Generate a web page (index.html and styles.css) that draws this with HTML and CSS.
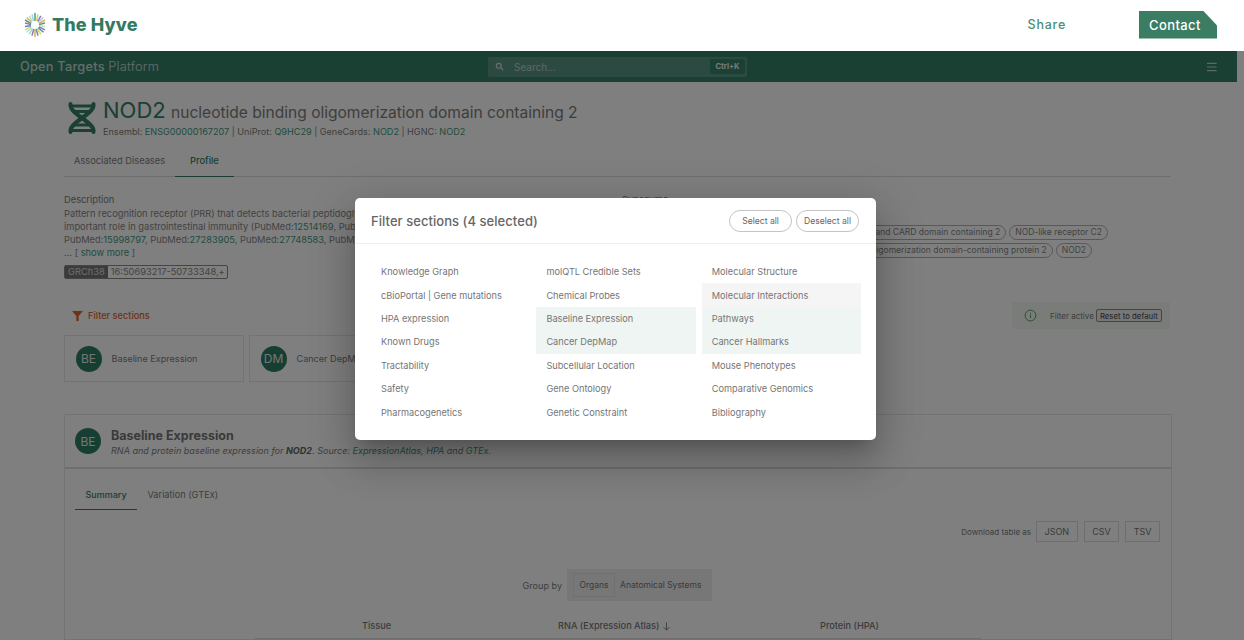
FILE: index.html
```html
<!DOCTYPE html>
<html lang="en">
<head>
<meta charset="utf-8">
<title>NOD2 profile page</title>
<link rel="stylesheet" href="styles.css">
</head>
<body>
<header class="site-header">
  <a class="brand">
    <svg class="brand-logo" viewBox="-12 -12 24 24" aria-hidden="true">
      <g stroke-width="1.5" stroke-linecap="butt" opacity=".85">
        <line x1="0" y1="-4" x2="0" y2="-12" stroke="#2f8f6b"/>
        <line x1="1.5" y1="-4" x2="3" y2="-10.500" stroke="#e0c948"/>
        <line x1="2.800" y1="-3.300" x2="5.800" y2="-9.200" stroke="#7a5fb5"/>
        <line x1="3.400" y1="-2.500" x2="8.300" y2="-7.500" stroke="#8ed0e6"/>
        <line x1="3.900" y1="-1.400" x2="10" y2="-5" stroke="#e09a45"/>
        <line x1="4" y1="-.4" x2="10" y2="-2" stroke="#2f8f6b"/>
        <line x1="4" y1=".8" x2="10" y2="1.400" stroke="#a8dcb8"/>
        <line x1="3.900" y1="1.800" x2="10" y2="4.800" stroke="#7a5fb5"/>
        <line x1="3.200" y1="2.800" x2="8.500" y2="7.300" stroke="#3f6fb5"/>
        <line x1="2.300" y1="3.400" x2="5.800" y2="9.200" stroke="#e0c948"/>
        <line x1="1.200" y1="4" x2="3" y2="10.600" stroke="#2f8f6b"/>
        <line x1="0" y1="4" x2="0" y2="12" stroke="#e09a45"/>
        <line x1="-1.200" y1="4" x2="-3" y2="10.600" stroke="#7a5fb5"/>
        <line x1="-2.300" y1="3.400" x2="-5.800" y2="9.200" stroke="#8ed0e6"/>
        <line x1="-3.200" y1="2.800" x2="-8.500" y2="7.300" stroke="#a8dcb8"/>
        <line x1="-3.900" y1="1.800" x2="-10" y2="4.800" stroke="#e0c948"/>
        <line x1="-4" y1=".8" x2="-10" y2="1.400" stroke="#3f6fb5"/>
        <line x1="-4" y1="-.4" x2="-10" y2="-2" stroke="#7a5fb5"/>
        <line x1="-3.900" y1="-1.400" x2="-10" y2="-5" stroke="#2f8f6b"/>
        <line x1="-3.400" y1="-2.500" x2="-8.300" y2="-7.500" stroke="#e09a45"/>
        <line x1="-2.800" y1="-3.300" x2="-5.800" y2="-9.200" stroke="#a8dcb8"/>
        <line x1="-1.500" y1="-4" x2="-3" y2="-10.500" stroke="#8ed0e6"/>
      </g>
    </svg>
    <span class="brand-name">The Hyve</span>
  </a>
  <nav class="site-nav">
    <a class="share-link">Share</a>
    <a class="contact-btn">Contact</a>
  </nav>
</header>

<div class="app-frame">
  <div class="app-scroll">
    <div class="app-bar">
      <div class="app-title">Open Targets <span class="app-title-light">Platform</span></div>
      <div class="search">
        <svg class="search-icon" viewBox="0 0 24 24" aria-hidden="true"><circle cx="10" cy="10" r="6.500" fill="none" stroke="currentColor" stroke-width="3"/><path d="M15 15l6 6" stroke="currentColor" stroke-width="3" stroke-linecap="round"/></svg>
        <span class="search-text">Search...</span>
        <kbd class="search-kbd">Ctrl+K</kbd>
      </div>
      <svg class="menu-icon" viewBox="0 0 12 10" aria-hidden="true"><path d="M0 1h10.500M0 5h10.500M0 9h10.500" stroke="currentColor" stroke-width="1.300"/></svg>
    </div>

    <main class="page">
      <section class="hero">
        <svg class="dna-icon" viewBox="0 0 28 32" aria-hidden="true">
          <g fill="none" stroke="#347f67" stroke-linecap="round">
            <path d="M2.500 2v1.500C2.500 12 25.500 20 25.500 28.500V30" stroke-width="4"/>
            <path d="M25.500 2v1.500C25.500 12 2.500 20 2.500 28.500V30" stroke-width="4"/>
            <path d="M3 4H25M6.500 9.500H21.500M6.500 23H21.500M3 28.500H25" stroke-width="2.800"/>
          </g>
        </svg>
        <div class="hero-text">
          <h1 class="hero-title"><span class="hero-symbol">NOD2</span> <span class="hero-name">nucleotide binding oligomerization domain containing 2</span></h1>
          <p class="hero-ids">Ensembl: <a>ENSG00000167207</a> | UniProt: <a>Q9HC29</a> | GeneCards: <a>NOD2</a> | HGNC: <a>NOD2</a></p>
        </div>
      </section>

      <div class="page-tabs">
        <span class="tab">Associated Diseases</span>
        <span class="tab tab-active">Profile</span>
      </div>

      <section class="profile">
        <div class="profile-desc">
          <h2 class="profile-label">Description</h2>
          <p class="desc-text">Pattern recognition receptor (PRR) that detects bacterial peptidogly<br>important role in gastrointestinal immunity (PubMed:<a>12514169</a>, PubM<br>PubMed:<a>15998797</a>, PubMed:<a>27283905</a>, PubMed:<a>27748583</a>, PubMe<br>... [ <a>show more</a> ]</p>
          <div class="locus"><span class="locus-tag">GRCh38</span><span class="locus-value">16:50693217-50733348,+</span></div>
        </div>
        <div class="profile-syn">
          <h2 class="profile-label">Synonyms</h2>
          <div class="chips chips-first">
            <span class="chip">nucleotide binding LRR and CARD domain containing 2</span>
            <span class="chip">NOD-like receptor C2</span>
          </div>
          <div class="chips chips-second">
            <span class="chip">Nucleotide-binding oligomerization domain-containing protein 2</span>
            <span class="chip">NOD2</span>
          </div>
        </div>
      </section>

      <div class="filter-row">
        <div class="filter-link">
          <svg class="filter-icon" viewBox="0 0 12 11" aria-hidden="true"><path d="M0 0h12L7.300 5.600V11H4.700V5.600z" fill="currentColor"/></svg>
          Filter sections
        </div>
        <div class="filter-alert">
          <svg class="info-icon" viewBox="0 0 14 14" aria-hidden="true"><circle cx="7" cy="7" r="5.800" fill="none" stroke="currentColor" stroke-width="1"/><path d="M7 6.200v3.600M7 4v1.200" stroke="currentColor" stroke-width="1"/></svg>
          <span class="filter-alert-text">Filter active</span>
          <button class="reset-btn">Reset to default</button>
        </div>
      </div>

      <div class="summary-cards">
        <div class="summary-card"><span class="avatar">BE</span><span>Baseline Expression</span></div>
        <div class="summary-card"><span class="avatar">DM</span><span>Cancer DepMap</span></div>
      </div>

      <section class="section-card">
        <header class="section-head">
          <span class="avatar">BE</span>
          <div class="section-heading">
            <h3 class="section-title">Baseline Expression</h3>
            <p class="section-sub">RNA and protein baseline expression for <b>NOD2</b>. Source: <a>ExpressionAtlas</a>, <a>HPA</a> and <a>GTEx</a>.</p>
          </div>
        </header>
        <div class="section-body">
          <div class="inner-tabs">
            <span class="inner-tab inner-tab-active">Summary</span>
            <span class="inner-tab">Variation (GTEx)</span>
          </div>
          <div class="download-row">
            <span class="download-label">Download table as</span>
            <button class="dl-btn">JSON</button>
            <button class="dl-btn">CSV</button>
            <button class="dl-btn">TSV</button>
          </div>
          <div class="group-row">
            <span class="group-label">Group by</span>
            <div class="group-toggle">
              <span class="group-opt group-opt-on">Organs</span>
              <span class="group-opt">Anatomical Systems</span>
            </div>
          </div>
          <div class="table-head">
            <span class="th th-tissue">Tissue</span>
            <span class="th th-rna">RNA (Expression Atlas) <svg class="sort-icon" viewBox="0 0 10 10" aria-hidden="true"><path d="M5 .5v8.500M1.500 5.500L5 9l3.500-3.500" fill="none" stroke="currentColor" stroke-width="1"/></svg></span>
            <span class="th th-protein">Protein (HPA)</span>
          </div>
        </div>
      </section>
    </main>
  </div>
  <div class="scrollbar"></div>

  <div class="backdrop"></div>

  <div class="modal" role="dialog">
    <header class="modal-head">
      <h2 class="modal-title">Filter sections (4 selected)</h2>
      <div class="modal-actions">
        <button class="pill-btn">Select all</button>
        <button class="pill-btn">Deselect all</button>
      </div>
    </header>
    <div class="modal-grid">
      <span class="opt">Knowledge Graph</span>
      <span class="opt">molQTL Credible Sets</span>
      <span class="opt">Molecular Structure</span>
      <span class="opt">cBioPortal | Gene mutations</span>
      <span class="opt">Chemical Probes</span>
      <span class="opt opt-hover">Molecular Interactions</span>
      <span class="opt">HPA expression</span>
      <span class="opt opt-on">Baseline Expression</span>
      <span class="opt opt-on">Pathways</span>
      <span class="opt">Known Drugs</span>
      <span class="opt opt-on">Cancer DepMap</span>
      <span class="opt opt-on">Cancer Hallmarks</span>
      <span class="opt">Tractability</span>
      <span class="opt">Subcellular Location</span>
      <span class="opt">Mouse Phenotypes</span>
      <span class="opt">Safety</span>
      <span class="opt">Gene Ontology</span>
      <span class="opt">Comparative Genomics</span>
      <span class="opt">Pharmacogenetics</span>
      <span class="opt">Genetic Constraint</span>
      <span class="opt">Bibliography</span>
    </div>
  </div>
</div>
</body>
</html>
```

FILE: styles.css
```css
* { box-sizing: border-box; }
html, body { margin: 0; height: 100%; overflow: hidden; }
body { font-family: Inter, "Liberation Sans", sans-serif; background: #fff; color: #7c7c7c; }
h1, h2, h3, p { margin: 0; font-weight: 400; }
a { color: #3f9a7c; }

.site-header { height: 51px; display: flex; align-items: center; justify-content: space-between; padding: 0 27px 2px 23px; background: #fff; }
.brand { display: flex; align-items: center; gap: 5px; }
.brand-logo { width: 24px; height: 24px; }
.brand-name { font-size: 18px; font-weight: 800; color: #337a60; letter-spacing: .1px; }
.site-nav { display: flex; align-items: center; gap: 73px; }
.share-link { font-size: 12.500px; font-weight: 500; color: #4a8f73; letter-spacing: .75px; }
.contact-btn { width: 78px; height: 28px; display: flex; align-items: center; padding-left: 10px; font-size: 13px; font-weight: 500; letter-spacing: .4px; color: #fff; background: #3a7d63; clip-path: polygon(0 0, 64px 0, 100% 15px, 100% 100%, 0 100%); }

.app-frame { position: relative; height: 589px; overflow: hidden; display: flex; }
.app-scroll { flex: 1; min-width: 0; background: #fff; }
.scrollbar { width: 7px; background: #fff; }
.backdrop { position: absolute; inset: 0; background: rgba(0, 0, 0, .5); }

.app-bar { height: 31px; display: flex; align-items: center; padding: 0 20px; background: #347f67; color: #fff; }
.app-title { font-size: 12.800px; font-weight: 500; letter-spacing: .2px; color: #fff; width: 468px; opacity: .72; }
.app-title-light { font-weight: 300; }
.search { width: 259px; height: 20px; display: flex; align-items: center; padding: 0 2px 0 7px; border-radius: 2px; background: #5b9585; color: #fff; }
.search-icon { width: 9px; height: 9px; opacity: .7; }
.search-text { flex: 1; margin-left: 10px; font-size: 10px; opacity: .55; }
.search-kbd { width: 35px; height: 15px; display: flex; align-items: center; justify-content: center; font-family: inherit; font-size: 7.500px; font-weight: 700; border-radius: 2px; background: #347f67; opacity: .9; }
.menu-icon { width: 11px; height: 10px; margin-left: auto; margin-right: -1px; opacity: .65; }

.page { padding: 17px 65px 0 64px; }
.hero { display: flex; align-items: flex-start; gap: 7px; padding-left: 4px; }
.dna-icon { width: 28px; height: 32px; flex: none; margin-top: 3px; }
.hero-title { font-size: 15.550px; line-height: 22px; white-space: nowrap; }
.hero-symbol { font-size: 22px; color: #347f67; }
.hero-name { margin-left: 1px; }
.hero-ids { font-size: 9.100px; line-height: 14px; margin-top: 1px; }

.page-tabs { display: flex; height: 35px; margin: 3px 1px 0 0; border-bottom: 1px solid #ddd; font-size: 9.300px; }
.tab { padding: 2px 10px 0; display: flex; align-items: center; }
.tab-active { color: #347f67; font-weight: 500; padding: 2px 15px 0; border-bottom: 1px solid #347f67; height: 35px; }

.profile { display: flex; padding-top: 16px; height: 125px; }
.profile-desc { width: 558px; flex: none; }
.profile-syn { flex: 1; min-width: 0; }
.profile-label { font-size: 9.300px; line-height: 13px; }
.desc-text { margin-top: 1px; font-size: 9.300px; line-height: 13px; color: #858585; white-space: nowrap; }
.locus { display: inline-flex; height: 14px; margin-top: 1px; font-size: 9.300px; line-height: 12px; border: 1px solid #8a8a8a; border-radius: 2px; }
.locus-tag { padding: 0 3px; background: #777; color: #ddd; }
.locus-value { padding: 0 2px 0 3px; color: #858585; }
.chips { display: flex; justify-content: flex-end; gap: 3px; margin-top: 3px; }
.chips-first { width: 486px; margin-top: 19px; }
.chips-second { width: 470px; }
.chip { height: 15px; padding: 0 5px; font-size: 8.500px; line-height: 13px; white-space: nowrap; border: 1px solid #b0b0b0; border-radius: 8px; color: #858585; }

.filter-row { height: 27px; display: flex; align-items: center; justify-content: space-between; padding: 0 2px 0 8px; }
.filter-link { display: flex; align-items: center; gap: 5px; font-size: 9.200px; font-weight: 500; color: #e0622c; }
.filter-icon { width: 11px; height: 10px; }
.filter-alert { width: 158px; height: 27px; display: flex; align-items: center; padding-left: 12px; background: #f2f8f2; }
.info-icon { width: 13px; height: 13px; color: #4a9c4a; }
.filter-alert-text { font-size: 8px; margin-left: 13px; }
.reset-btn { height: 13px; width: 66px; margin-left: 2px; padding: 0; font-family: inherit; font-size: 7.800px; color: #444; background: #efefef; border: 1px solid #8a8a8a; border-radius: 2px; }

.summary-cards { display: flex; gap: 5px; margin-top: 6px; }
.summary-card { width: 180px; height: 47px; display: flex; align-items: center; gap: 10px; padding-left: 10.500px; font-size: 9.100px; border: 1px solid #e6e6e6; }
.avatar { width: 26px; height: 26px; flex: none; display: flex; align-items: center; justify-content: center; border-radius: 50%; font-size: 12px; color: #e4ece9; background: #2f7d64; }

.section-card { margin-top: 32px; border: 1px solid #e6e6e6; }
.section-head { height: 54px; display: flex; align-items: center; gap: 10px; padding-left: 10px; border-bottom: 2px solid #dedede; }
.section-heading { padding-top: 2px; }
.section-title { font-size: 12.500px; font-weight: 700; line-height: 15px; margin-bottom: 1px; color: #757575; }
.section-sub { font-size: 9.050px; line-height: 13px; font-style: italic; }
.section-sub b { font-weight: 700; color: #666; }
.section-body { padding: 0 10px; }
.inner-tabs { display: flex; height: 41px; align-items: flex-end; font-size: 9.200px; }
.inner-tab { padding: 7px 10.500px 0; height: 28px; display: flex; align-items: flex-start; }
.inner-tab-active { width: 62px; justify-content: center; padding: 7px 0 0; font-size: 9px; color: #347f67; font-weight: 500; border-bottom: 1px solid #347f67; }
.download-row { display: flex; align-items: center; justify-content: flex-end; gap: 5px; margin-top: 11px; padding-right: 1px; }
.download-label { font-size: 8px; }
.dl-btn { height: 21px; padding: 0 7.500px; font-family: inherit; font-size: 9px; color: #777; background: none; border: 1px solid #dcdcdc; }
.dl-btn + .dl-btn { margin-left: 1px; }
.group-row { display: flex; align-items: center; justify-content: center; gap: 5px; margin-top: 27px; padding-right: 1px; }
.group-label { font-size: 9.100px; }
.group-toggle { display: flex; align-items: center; height: 32px; padding: 0 9px 0 6px; gap: 3px; background: #eee; }
.group-opt { font-size: 8.500px; font-weight: 400; color: #777; padding: 0 2px; }
.group-opt-on { height: 24px; width: 42px; padding: 0; display: flex; align-items: center; justify-content: center; border: 1px solid #e0e0e0; }
.table-head { display: flex; margin: 19px 180px 0 180px; height: 19px; border-bottom: 1px solid #ddd; font-size: 9.200px; font-weight: 500; color: #777; }
.th-tissue { margin-left: 107px; width: 196px; }
.th-rna { width: 262px; display: flex; align-items: flex-start; gap: 3px; }
.sort-icon { width: 9px; height: 9px; margin-top: 2px; }

.modal { position: absolute; left: 355px; top: 147px; width: 521px; height: 242px; background: #fff; border-radius: 5px; box-shadow: 0 11px 15px -7px rgba(0,0,0,.2), 0 24px 38px 3px rgba(0,0,0,.14), 0 9px 46px 8px rgba(0,0,0,.12); }
.modal-head { height: 46px; display: flex; align-items: center; justify-content: space-between; padding: 0 17px 0 16px; border-bottom: 1px solid #eee; }
.modal-title { font-size: 13px; font-weight: 500; color: #666; letter-spacing: .05px; }
.modal-actions { display: flex; gap: 4px; }
.pill-btn { width: 63px; height: 22px; padding: 0; font-family: inherit; font-size: 8.600px; color: #666; background: #fff; border: 1px solid #c4c4c4; border-radius: 11px; }
.modal-grid { display: grid; grid-template-columns: repeat(3, 159.200px); column-gap: 6.200px; grid-auto-rows: 23.400px; padding: 16px 0 0 16px; }
.opt { display: flex; align-items: center; padding-left: 10px; font-size: 9.200px; color: #757575; white-space: nowrap; }
.opt-on { background: #eff5f3; }
.opt-hover { background: #f5f5f5; }
```
